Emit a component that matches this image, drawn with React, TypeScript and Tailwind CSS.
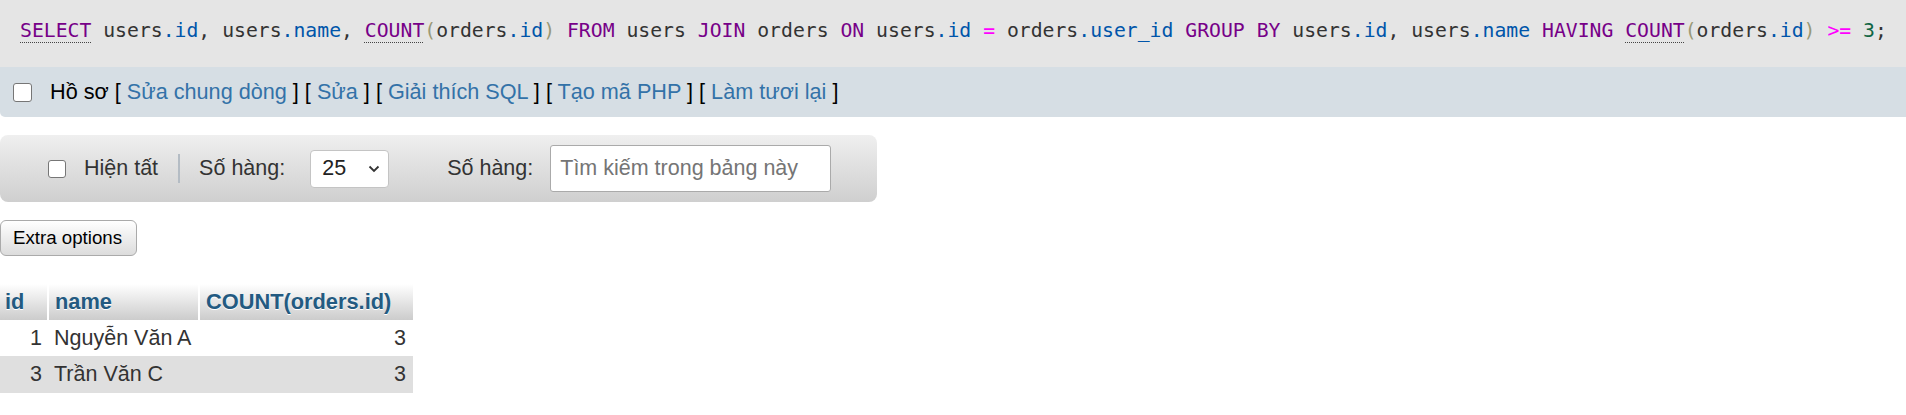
import React from "react";

const K = ({ children, u }: { children: React.ReactNode; u?: boolean }) => (
  <span
    className={
      "text-[#770088] " +
      (u ? "underline decoration-dotted decoration-[#444] underline-offset-[5px] decoration-1" : "")
    }
  >
    {children}
  </span>
);
const P = ({ children }: { children: React.ReactNode }) => <span className="text-[#0055aa]">{children}</span>;
const B = ({ children }: { children: React.ReactNode }) => <span className="text-[#999977]">{children}</span>;
const O = ({ children }: { children: React.ReactNode }) => <span className="text-[#ff00ff]">{children}</span>;

const Check = ({ size = 19 }: { size?: number }) => (
  <span
    className="inline-block shrink-0 bg-white border-[1.5px] border-[#767676] rounded-[3px]"
    style={{ width: size, height: size }}
  />
);

const L = ({ children }: { children: React.ReactNode }) => <span className="text-[#3372a8]">{children}</span>;

export default function App() {
  return (
    <div className="w-[1906px] h-[415px] bg-white font-['Liberation_Sans',Arial,sans-serif] text-[21.5px] text-[#333] overflow-hidden">
      {/* SQL code */}
      <div className="h-[67px] bg-[#e5e5e5] flex items-center pl-[20px] pb-[6px]">
        <div className="font-['DejaVu_Sans_Mono',monospace] text-[19.75px] whitespace-pre text-[#333] leading-none">
          <K u>SELECT</K> users<P>.id</P>, users<P>.name</P>, <K u>COUNT</K>
          <B>(</B>orders<P>.id</P>
          <B>)</B> <K>FROM</K> users <K>JOIN</K> orders <K>ON</K> users<P>.id</P> <O>=</O> orders<P>.user_id</P>{" "}
          <K>GROUP</K> <K>BY</K> users<P>.id</P>, users<P>.name</P> <K>HAVING</K> <K u>COUNT</K>
          <B>(</B>orders<P>.id</P>
          <B>)</B> <O>&gt;=</O> <span className="text-[#116644]">3</span>;
        </div>
      </div>

      {/* links bar */}
      <div className="h-[50px] bg-[#d6dee4] rounded-bl-[5px] flex items-center pl-[13px] gap-[18px]">
        <Check size={19} />
        <div className="text-black whitespace-pre text-[21.65px]">
          Hồ sơ [ <L>Sửa chung dòng</L> ] [ <L>Sửa</L> ] [ <L>Giải thích SQL</L> ] [ <L>Tạo mã PHP</L> ] [{" "}
          <L>Làm tươi lại</L> ]
        </div>
      </div>

      {/* toolbar */}
      <div className="mt-[18px] w-[877px] h-[67px] rounded-[8px] bg-gradient-to-b from-[#efefef] to-[#cfcfcf] flex items-center pl-[48px]">
        <Check size={18} />
        <span className="ml-[18px] text-[#333]">Hiện tất</span>
        <span className="ml-[20px] w-[2px] h-[29px] bg-[#b4bcc4]" />
        <span className="ml-[19px] text-[#333]">Số hàng:</span>
        <div className="ml-[25px] w-[79px] h-[38px] bg-white border border-[#c4c4c4] rounded-[4px] flex items-center pl-[11px] text-[#222]">
          <span>25</span>
          <svg className="ml-auto mr-[8px]" width="12" height="8" viewBox="0 0 12 8">
            <polyline points="1.5,1.5 6,6 10.5,1.5" fill="none" stroke="#333" strokeWidth="1.8" />
          </svg>
        </div>
        <span className="ml-[58px] text-[#333]">Số hàng:</span>
        <div className="ml-[17px] w-[281px] h-[47px] bg-white border border-[#aaaaaa] rounded-[3px] flex items-center pl-[9px] text-[#757575]">
          Tìm kiếm trong bảng này
        </div>
      </div>

      {/* extra options */}
      <div className="mt-[18px] w-[137px] h-[36px] rounded-[6px] border border-[#aaaaaa] bg-gradient-to-b from-[#ffffff] to-[#dcdcdc] flex items-center pl-[12px] text-[18.7px] text-black">
        Extra options
      </div>

      {/* result table */}
      <div className="mt-[28px] w-[413px]">
        <div className="flex h-[36px] bg-gradient-to-b from-[#ffffff] to-[#cccccc] font-bold text-[#235a81] [text-shadow:0_1px_0_#fff] text-[21.8px]">
          <div className="w-[47px] pl-[5px] flex items-center">id</div>
          <div className="w-[151px] pl-[6px] flex items-center border-l-2 border-white">name</div>
          <div className="flex-1 pl-[6px] flex items-center border-l-2 border-white">COUNT(orders.id)</div>
        </div>
        <div className="flex h-[36px] bg-white items-center">
          <div className="w-[49px] pr-[7px] text-right">1</div>
          <div className="w-[150px] pl-[5px]">Nguyễn Văn A</div>
          <div className="flex-1 pr-[7px] text-right">3</div>
        </div>
        <div className="flex h-[37px] bg-[#dfdfdf] items-center">
          <div className="w-[49px] pr-[7px] text-right">3</div>
          <div className="w-[150px] pl-[5px]">Trần Văn C</div>
          <div className="flex-1 pr-[7px] text-right">3</div>
        </div>
      </div>
    </div>
  );
}
